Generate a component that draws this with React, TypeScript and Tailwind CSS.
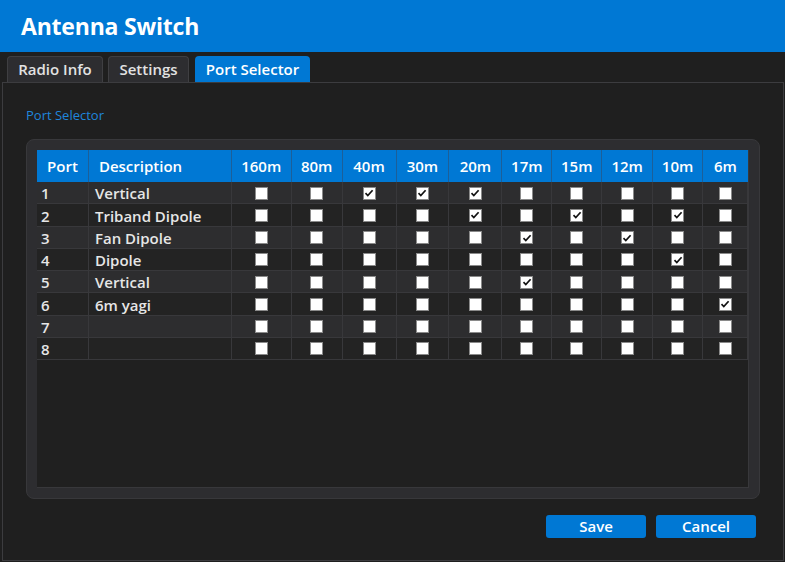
import React from "react";

const bands = ["160m", "80m", "40m", "30m", "20m", "17m", "15m", "12m", "10m", "6m"];
const bandWidths = [60, 51, 54, 53, 53, 50, 50, 51, 50, 45];

const rows: { port: number; desc: string; checked: string[] }[] = [
  { port: 1, desc: "Vertical", checked: ["40m", "30m", "20m"] },
  { port: 2, desc: "Triband Dipole", checked: ["20m", "15m", "10m"] },
  { port: 3, desc: "Fan Dipole", checked: ["17m", "12m"] },
  { port: 4, desc: "Dipole", checked: ["10m"] },
  { port: 5, desc: "Vertical", checked: ["17m"] },
  { port: 6, desc: "6m yagi", checked: ["6m"] },
  { port: 7, desc: "", checked: [] },
  { port: 8, desc: "", checked: [] },
];

function Check({ on }: { on: boolean }) {
  return (
    <div className="w-[13px] h-[13px] bg-white border border-[#8a8a8a] flex items-center justify-center">
      {on && (
        <svg width="10" height="10" viewBox="0 0 10 10">
          <path d="M1.5 5.2 L3.8 7.5 L8.6 2.2" fill="none" stroke="#111" strokeWidth="1.7" />
        </svg>
      )}
    </div>
  );
}

export default function App() {
  const font = { fontFamily: '"Segoe UI", "Open Sans", "Noto Sans", sans-serif' };
  return (
    <div className="w-[785px] h-[562px] bg-[#1f1f1f] flex flex-col overflow-hidden" style={font}>
      <div className="h-[52px] bg-[#0078d4] flex items-center pl-[21px] shrink-0">
        <span className="text-white font-bold text-[23px] leading-none tracking-[-0.2px]">Antenna Switch</span>
      </div>
      <div className="flex items-end h-[30px] pl-[7px] gap-[5px] shrink-0">
        <div className="h-[26px] w-[96px] rounded-t-[4px] bg-[#2d2d30] border border-b-0 border-[#3f3f42] flex items-center justify-center text-[15px] font-semibold text-[#e2e2e2]">
          Radio Info
        </div>
        <div className="h-[26px] w-[81px] rounded-t-[4px] bg-[#2d2d30] border border-b-0 border-[#3f3f42] flex items-center justify-center text-[15px] font-semibold text-[#e2e2e2]">
          Settings
        </div>
        <div className="h-[26px] w-[115px] ml-[1px] rounded-t-[4px] bg-[#0078d4] flex items-center justify-center text-[15px] font-semibold text-white">
          Port Selector
        </div>
      </div>
      <div className="ml-[2px] w-[782px] h-[479px] border border-[#3c3c3f] bg-[#1f1f1f] flex flex-col">
        <div className="pl-[23px] pt-[23px] h-[56px] text-[13px] leading-[18px] text-[#1f86dc]">Port Selector</div>
        <div className="ml-[23px] w-[734px] h-[360px] rounded-[8px] bg-[#2d2d30] border border-[#38383b] p-[10px]">
          <div className="w-[712px] h-[338px] bg-[#202020] border-r border-b border-[#38383b] flex flex-col">
            <div className="flex h-[32px] bg-[#0078d4] text-white text-[15px] font-semibold">
              <div className="w-[52px] flex items-center justify-center border-r border-[#1c5f99]">Port</div>
              <div className="w-[143px] flex items-center pl-[10px] border-r border-[#1c5f99]">Description</div>
              {bands.map((b, i) => (
                <div
                  key={b}
                  style={{ width: bandWidths[i] }}
                  className={"flex items-center justify-center " + (i < bands.length - 1 ? "border-r border-[#1c5f99]" : "")}
                >
                  {b}
                </div>
              ))}
            </div>
            {rows.map((r, idx) => (
              <div
                key={r.port}
                className={
                  "flex h-[22.25px] text-[15px] font-semibold text-[#e6e6e6] border-b border-[#38383b] " +
                  (idx % 2 === 0 ? "bg-[#2d2d2f]" : "bg-[#232323]")
                }
              >
                <div className="w-[52px] flex items-center pl-[4px] pt-[2px] border-r border-[#38383b]">{r.port}</div>
                <div className="w-[143px] flex items-center pl-[6px] pt-[2px] border-r border-[#38383b]">{r.desc}</div>
                {bands.map((b, i) => (
                  <div
                    key={b}
                    style={{ width: bandWidths[i] }}
                    className="flex items-center justify-center pt-[1px] border-r border-[#38383b]"
                  >
                    <Check on={r.checked.includes(b)} />
                  </div>
                ))}
              </div>
            ))}
          </div>
        </div>
        <div className="flex justify-end gap-[10px] pr-[27px] mt-[16px]">
          <button className="w-[100px] h-[23px] rounded-[3px] bg-[#0078d4] text-white text-[15px] font-semibold leading-none">
            Save
          </button>
          <button className="w-[100px] h-[23px] rounded-[3px] bg-[#0078d4] text-white text-[15px] font-semibold leading-none">
            Cancel
          </button>
        </div>
      </div>
    </div>
  );
}
